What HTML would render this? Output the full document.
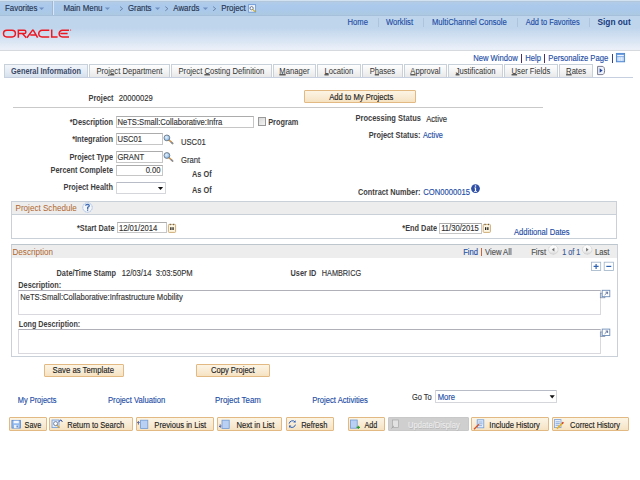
<!DOCTYPE html>
<html><head><meta charset="utf-8">
<style>
html,body{margin:0;padding:0;width:640px;height:480px;overflow:hidden;background:#fff;}
body{font-family:"Liberation Sans",sans-serif;font-size:7.65px;color:#333;position:relative;}
.a{position:absolute;white-space:nowrap;line-height:1;transform:scaleY(1.13);}
.bx{position:absolute;}
.a{margin-top:0.6px;}
.nav{margin-top:1px;}
.hl{margin-top:0;}
.a:not(.lbl):not(.b):not(.gt),.fld span,.btn span{-webkit-text-stroke:0.12px currentColor;}
.tab i,.fld span,.btn span{transform:scaleY(1.13);}
.tab i{font-style:normal;display:inline-block;}
.tab u{text-decoration-thickness:0.6px;text-underline-offset:0.3px;}
.r{text-align:right;}
.b{font-weight:bold;}
.lk{color:#1c4ca4;}
svg{position:absolute;overflow:visible;}
#topbar{position:absolute;left:0;top:0;width:640px;height:15px;background:linear-gradient(#d2e2f0 0,#d2e2f0 1px,#b2c6dc 1px,#b2c6dc 2px,#b2cce8 2px,#aac9ec 6px,#aac9ea 10px,#adc9e2 15px);border-bottom:1px solid #a6c0dc;}
#hdr{position:absolute;left:0;top:16px;width:640px;height:34px;background:linear-gradient(#bed5ec 0,#bfd5ec 35%,#cadcef 50%,#d2e1f2 62%,#dce7f4 78%,#e8eef8 92%,#ebf0f8 100%);}
#hdrline{position:absolute;left:0;top:49.5px;width:640px;height:1.5px;background:#d6dadf;}
.nav{color:#27344f;font-size:7.9px;top:4px;-webkit-text-stroke:0.15px #27344f;}
.hl{color:#1c4ca4;top:18.5px;}
.hsep{position:absolute;top:18px;height:9px;width:1px;background:#aec4de;}
.tab{position:absolute;top:64px;height:13.5px;border:1px solid #c8d0da;border-bottom:none;background:linear-gradient(#fefefe,#f3f3f3 50%,#e6e6e6);color:#333;text-align:center;line-height:14.5px;box-sizing:border-box;white-space:nowrap;}
.tab.act{background:linear-gradient(#f2f6fb,#e4ebf4 50%,#d3dfec);font-weight:bold;color:#3a4866;font-size:7.35px;}
.fld{position:absolute;border:1px solid #c6c6c6;border-top-color:#acacac;background:#fff;color:#333;box-sizing:border-box;}
.fld span{position:absolute;left:0.9px;top:50%;line-height:1;margin-top:-3.2px;white-space:nowrap;}
.lbl{font-weight:bold;color:#3e3e3e;font-size:7.35px;}
.btn{position:absolute;border:1px solid #e2b982;background:linear-gradient(#fcf4e4,#f9ecd6 50%,#f6e2c2);box-sizing:border-box;color:#222;border-radius:1px;}
.btn span{position:absolute;top:50%;margin-top:-3.2px;line-height:1;white-space:nowrap;}
.grp{position:absolute;border:1px solid #c9d0d8;box-sizing:border-box;}
.ghd{position:absolute;left:0;top:0;right:0;height:12px;background:#ededed;}
.gt{color:#b0652c;font-size:8.1px;}
.hr{position:absolute;height:1px;background:#c9c9c9;}
.ns{color:#505050;}
</style></head><body>
<div id="topbar"></div>
<div class="bx" style="left:52px;top:1px;width:1px;height:14px;background:#9fb8d8;border-right:1px solid #dbe6f4"></div>
<div class="a nav" style="left:5px">Favorites</div>
<div class="a nav" style="left:63.4px">Main Menu</div>
<div class="a nav" style="left:127.9px">Grants</div>
<div class="a nav" style="left:173.3px">Awards</div>
<div class="a nav" style="left:221.2px">Project</div>
<svg style="left:0;top:0" width="640" height="16">
 <g fill="#7190c2"><path d="M39 7.6h5.2l-2.6 2.5z"/><path d="M104.8 7.6h5.2l-2.6 2.5z"/><path d="M155 7.6h5.2l-2.6 2.5z"/><path d="M202.8 7.6h5.2l-2.6 2.5z"/></g>
 <g fill="none" stroke="#5d7296" stroke-width="0.8"><path d="M120 6.6l2.6 2.1-2.6 2.1"/><path d="M165.3 6.6l2.6 2.1-2.6 2.1"/><path d="M213.1 6.6l2.6 2.1-2.6 2.1"/></g>
 <rect x="248.6" y="4.6" width="7" height="7.6" fill="#eef3fb" stroke="#6c9ad6" stroke-width="0.9"/>
 <circle cx="251.6" cy="8.2" r="1.6" fill="#fff" stroke="#4a5a7a" stroke-width="0.8"/>
 <path d="M252.8 9.4l2.2 2.4" stroke="#d8b01a" stroke-width="1.3"/>
</svg>

<div id="hdr"></div>
<div id="hdrline"></div>
<svg style="left:0;top:0" width="80" height="45">
 <g fill="none" stroke="#ec1822" stroke-width="1.5">
  <rect x="3.5" y="30.25" width="11.9" height="6.7" rx="3.35"/>
  <path d="M18.35 37.7V30.25H24.2A1.675 1.675 0 0 1 24.2 33.6H18.35M22.4 33.6L26.3 37.7"/>
  <path d="M26.9 37.7L32.4 30.4Q32.9 29.8 33.4 30.4L37.6 37.7M30.3 35H35.9"/>
  <path d="M49.3 30.25H42.1A3.35 3.35 0 0 0 42.1 36.95H49.3"/>
  <path d="M51.7 29.5V36.95H57.6"/>
  <path d="M69 30.25H62.5A3.35 3.35 0 0 0 62.5 36.95H69M60.3 33.6H67.6"/>
 </g>
 <circle cx="70.6" cy="30" r="0.6" fill="#ec1822"/>
</svg>

<div class="a hl" style="left:347.5px">Home</div>
<div class="hsep" style="left:377.5px"></div>
<div class="a hl" style="left:386px">Worklist</div>
<div class="hsep" style="left:422.5px"></div>
<div class="a hl" style="left:432px">MultiChannel Console</div>
<div class="hsep" style="left:517px"></div>
<div class="a hl" style="left:525.8px;font-size:7.4px">Add to Favorites</div>
<div class="hsep" style="left:589px"></div>
<div class="a hl b" style="left:597.5px;font-size:8.3px;color:#163a7e;top:18px">Sign out</div>

<div class="a lk" style="left:473.2px;top:54.8px">New Window</div>
<div class="bx" style="left:521px;top:54px;width:1px;height:9px;background:#4a2e66;width:1.2px"></div>
<div class="a lk" style="left:525.2px;top:54.8px">Help</div>
<div class="bx" style="left:544px;top:54px;width:1px;height:9px;background:#4a2e66;width:1.2px"></div>
<div class="a lk" style="left:548.3px;top:54.8px">Personalize Page</div>
<div class="bx" style="left:612px;top:54px;width:1px;height:9px;background:#33438c;width:1.2px"></div>
<svg style="left:0;top:0" width="640" height="80">
 <rect x="616.4" y="53.4" width="8.2" height="8.4" fill="#6f9fe0" stroke="#4f86d2" stroke-width="0.9"/>
 <rect x="617.2" y="55.1" width="6.6" height="1.1" fill="#fff"/>
 <rect x="617.2" y="56.9" width="6.6" height="4.2" fill="#c4d9f6"/>
 <path d="M619.3 57V61M621.5 57V61M617.2 59H623.8" stroke="#eef4fc" stroke-width="0.5"/>
</svg>

<div class="tab act" style="left:4px;width:84px"><i>General Information</i></div>
<div class="tab" style="left:89px;width:80.8px"><i>Proj<u>e</u>ct Department</i></div>
<div class="tab" style="left:171px;width:100.8px"><i>Project <u>C</u>osting Definition</i></div>
<div class="tab" style="left:272.5px;width:43.8px"><i><u>M</u>anager</i></div>
<div class="tab" style="left:317px;width:43.8px"><i><u>L</u>ocation</i></div>
<div class="tab" style="left:362px;width:40.8px"><i>P<u>h</u>ases</i></div>
<div class="tab" style="left:404px;width:42.8px"><i><u>A</u>pproval</i></div>
<div class="tab" style="left:448px;width:55.2px"><i><u>J</u>ustification</i></div>
<div class="tab" style="left:504px;width:53.8px"><i><u>U</u>ser Fields</i></div>
<div class="tab" style="left:559px;width:34.2px"><i><u>R</u>ates</i></div>
<div class="bx" style="left:4px;top:77px;width:629px;height:1px;background:#c6cfe0"></div>
<svg style="left:0;top:0" width="640" height="80">
 <path d="M597.6 66.4H602.2Q604.6 66.4 604.6 70.5Q604.6 74.6 602.2 74.6H597.6Z" fill="#eef2fb" stroke="#6e6e82" stroke-width="0.9"/>
 <path d="M599.6 68.2L602.6 70.5L599.6 72.8Z" fill="#24449a"/>
</svg>

<!-- main fields -->
<div class="a lbl r" style="right:526.5px;top:94.2px">Project</div>
<div class="a" style="left:118.8px;top:94.2px">20000029</div>
<div class="btn" style="left:304px;top:90px;width:112px;height:13px"><span style="left:24.2px;margin-top:-2.4px">Add to My Projects</span></div>
<div class="hr" style="left:13px;top:107px;width:530px"></div>

<div class="a lbl r" style="right:527px;top:118px">*Description</div>
<div class="fld" style="left:115.5px;top:115.5px;width:138px;height:12.5px"><span>NeTS:Small:Collaborative:Infra</span></div>
<div class="bx" style="left:258.2px;top:117.3px;width:8px;height:8.4px;border:1px solid #999;box-sizing:border-box;background:linear-gradient(135deg,#d8d8d8,#f4f4f4)"></div>
<div class="a lbl" style="left:268.2px;top:118.5px">Program</div>

<div class="a lbl r" style="right:527px;top:135.5px">*Integration</div>
<div class="fld" style="left:115.5px;top:133.3px;width:47.5px;height:11.3px"><span>USC01</span></div>
<div class="a" style="left:181px;top:138.3px">USC01</div>

<div class="a lbl r" style="right:527px;top:153px">Project Type</div>
<div class="fld" style="left:115.5px;top:151px;width:47.5px;height:11.5px"><span>GRANT</span></div>
<div class="a" style="left:181px;top:156.6px">Grant</div>
<svg style="left:0;top:0" width="640" height="200">
 <defs><radialGradient id="mg" cx="0.4" cy="0.4" r="0.6"><stop offset="0" stop-color="#e6f4ff"/><stop offset="1" stop-color="#7fb4e6"/></radialGradient></defs>
 <g id="mag">
  <path d="M169.2 140.2L172.6 143.4" stroke="#d9913a" stroke-width="1.6" stroke-linecap="round"/>
  <path d="M171.4 142.3L172.6 143.4" stroke="#7d90a8" stroke-width="1.6" stroke-linecap="round"/>
  <circle cx="166.9" cy="137.9" r="2.9" fill="url(#mg)" stroke="#6f7884" stroke-width="0.9"/>
 </g>
 <use href="#mag" y="17.6"/>
</svg>

<div class="a lbl r" style="right:527px;top:166.5px">Percent Complete</div>
<div class="fld" style="left:115.5px;top:164.5px;width:47.5px;height:11.3px"><span style="left:auto;right:1.5px">0.00</span></div>
<div class="a lbl" style="left:192px;top:170px">As Of</div>

<div class="a lbl r" style="right:527px;top:183px">Project Health</div>
<div class="fld" style="left:115.5px;top:182.2px;width:50px;height:12.3px;border-color:#d4d6dc;border-top-color:#b8bcc6;border-radius:1px"></div>
<svg style="left:0;top:0" width="640" height="200"><path d="M157.9 187H163.1L160.5 190.1Z" fill="#111"/></svg>
<div class="a lbl" style="left:192px;top:186.6px">As Of</div>

<div class="a lbl" style="left:355.5px;top:114.3px;font-size:7.5px">Processing Status</div>
<div class="a" style="left:426.2px;top:115.3px">Active</div>
<div class="a lbl r" style="right:219.5px;top:131.4px">Project Status:</div>
<div class="a lk" style="left:423px;top:131.4px;font-size:7.3px">Active</div>
<div class="a lbl r" style="right:219.5px;top:188.2px">Contract Number:</div>
<div class="a lk" style="left:423.2px;top:188.2px">CON0000015</div>
<svg style="left:0;top:0" width="640" height="200">
 <circle cx="475.5" cy="188.6" r="4.4" fill="#2f50a6"/>
 <circle cx="475.5" cy="186" r="0.8" fill="#fff"/>
 <path d="M474.3 187.5H476.1V191H477V191.8H474V191H474.9V188.3H474.3Z" fill="#fff"/>
</svg>

<!-- Project Schedule -->
<div class="grp" style="left:11px;top:201px;width:606px;height:37.5px"><div class="ghd" style="border-bottom:1px solid #c9d0d8"></div></div>
<div class="a gt" style="left:15.5px;top:204.3px">Project Schedule</div>
<svg style="left:0;top:0" width="640" height="240">
 <circle cx="87.5" cy="207.5" r="4.7" fill="#f6f7fa" stroke="#9dbbe8" stroke-width="1" stroke-dasharray="1.2 0.5"/>
 <path d="M85.5 205.6Q85.8 204.4 87.5 204.4Q89.3 204.5 89.3 205.7Q89.2 206.6 87.7 207.3V209.2" fill="none" stroke="#3c6ab4" stroke-width="1.3"/>
 <rect x="87" y="209.6" width="1.2" height="1.2" fill="#3c6ab4"/>
</svg>
<div class="a lbl r" style="right:525.5px;top:224.3px">*Start Date</div>
<div class="fld" style="left:117px;top:222.3px;width:49.7px;height:11.2px"><span>12/01/2014</span></div>
<div class="a lbl r" style="right:203px;top:224.3px">*End Date</div>
<div class="fld" style="left:439.3px;top:222.5px;width:42.5px;height:11.2px"><span>11/30/2015</span></div>
<svg style="left:0;top:0" width="640" height="240">
 <g id="cal">
  <rect x="168.4" y="224.4" width="7.2" height="8" rx="0.8" fill="#fdf6e2" stroke="#c9a46a" stroke-width="0.9"/>
  <rect x="170.2" y="227.2" width="1.3" height="2.8" fill="#222"/><rect x="172.4" y="227.2" width="1.3" height="2.8" fill="#222"/>
  <rect x="169.8" y="223.8" width="0.9" height="1.4" fill="#555"/><rect x="173.2" y="223.8" width="0.9" height="1.4" fill="#555"/>
 </g>
 <use href="#cal" x="314.8"/>
</svg>
<div class="a lk" style="left:514px;top:228px">Additional Dates</div>

<!-- Description -->
<div class="grp" style="left:11px;top:244px;width:606.5px;height:112.5px;border-top-color:#bcc6cc"><div class="ghd" style="height:13px"></div></div>
<div class="a gt" style="left:12.5px;top:248px">Description</div>
<div class="a lk" style="left:463.2px;top:248.3px">Find</div>
<div class="bx" style="left:481px;top:248px;width:1px;height:8px;background:#c8643a"></div>
<div class="a ns" style="left:485px;top:248.3px">View All</div>
<div class="a ns" style="left:531.2px;top:248.3px">First</div>
<div class="a" style="left:562.2px;top:248.3px;font-size:7.2px;color:#3a5a96">1 of 1</div>
<div class="a ns" style="left:595px;top:248.3px">Last</div>
<svg style="left:0;top:0" width="640" height="300">
 <defs><linearGradient id="cg" x1="0" y1="0" x2="0" y2="1"><stop offset="0" stop-color="#ffffff"/><stop offset="0.6" stop-color="#f2f2f2"/><stop offset="1" stop-color="#d6d6d6"/></linearGradient></defs>
 <circle cx="553.3" cy="249.6" r="4.7" fill="url(#cg)" stroke="#c4c4c4" stroke-width="0.7" stroke-dasharray="1.1 0.5"/>
 <path d="M554.4 247.8V251.6L551.9 249.7Z" fill="#6c6c6c"/>
 <circle cx="587.2" cy="249.6" r="4.7" fill="url(#cg)" stroke="#c4c4c4" stroke-width="0.7" stroke-dasharray="1.1 0.5"/>
 <path d="M586.1 247.8V251.6L588.6 249.7Z" fill="#6c6c6c"/>
 <rect x="591.5" y="262.2" width="9.2" height="8.3" fill="#fff" stroke="#9fb2c8" stroke-width="0.8"/>
 <path d="M593.6 266.4H598.6M596.1 263.9V268.9" stroke="#2e62b0" stroke-width="1.2"/>
 <rect x="604.2" y="262.2" width="9.2" height="8.3" fill="#fff" stroke="#9fb2c8" stroke-width="0.8"/>
 <path d="M606.3 266.4H611.3" stroke="#2e62b0" stroke-width="1.2"/>
</svg>

<div class="a lbl r" style="right:524px;top:269.2px">Date/Time Stamp</div>
<div class="a" style="left:121.75px;top:269.2px">12/03/14&nbsp; 3:03:50PM</div>
<div class="a lbl r" style="right:323.75px;top:269.2px">User ID</div>
<div class="a" style="left:321.75px;top:269.2px;font-size:7.3px">HAMBRICG</div>
<div class="a lbl" style="left:18.25px;top:281.2px">Description:</div>
<div class="fld" style="left:18.25px;top:290.3px;width:582.3px;height:24.6px;border-color:#d8d8de;border-top:1.5px solid #b0b0b8"><span style="top:2.7px;margin-top:0">NeTS:Small:Collaborative:Infrastructure Mobility</span></div>
<div class="a lbl" style="left:18.75px;top:320px;font-size:7.2px">Long Description:</div>
<div class="fld" style="left:18.25px;top:328.7px;width:582.3px;height:25px;border-color:#d8d8de;border-top:1.5px solid #b0b0b8"></div>
<svg style="left:0;top:0" width="640" height="360">
 <g id="exp">
  <rect x="600.3" y="293.2" width="4.6" height="4.6" fill="#d8e4f4" stroke="#7a86a0" stroke-width="0.7"/>
  <rect x="602.2" y="290.3" width="7.6" height="6.4" fill="#fff" stroke="#6e8db8" stroke-width="0.9"/>
  <path d="M604.6 295L607.6 292.2M605.6 292.2H607.6V294.2" fill="none" stroke="#4a5a88" stroke-width="0.8"/>
 </g>
 <use href="#exp" y="38.8"/>
</svg>

<div class="btn" style="left:44.2px;top:363.7px;width:79.6px;height:13px"><span style="left:7.4px;font-size:7.75px">Save as Template</span></div>
<div class="btn" style="left:196.2px;top:363.7px;width:73.8px;height:13px"><span style="left:13.7px">Copy Project</span></div>

<div class="a lk" style="left:17.7px;top:396.2px;font-size:7.45px">My Projects</div>
<div class="a lk" style="left:108px;top:396.2px">Project Valuation</div>
<div class="a lk" style="left:215px;top:396.2px;font-size:7.9px">Project Team</div>
<div class="a lk" style="left:312.2px;top:396.2px">Project Activities</div>
<div class="a" style="left:412px;top:393.2px;font-size:7.45px;color:#333">Go To</div>
<div class="fld" style="left:435.2px;top:390.3px;width:122.3px;height:13px;border-color:#d4d6dc;border-top-color:#b8bcc6;border-radius:1px"><span class="lk" style="left:1.5px">More</span></div>
<svg style="left:0;top:0" width="640" height="420"><path d="M549.6 395.3H554.8L552.2 398.4Z" fill="#111"/></svg>

<!-- toolbar -->
<div class="btn" style="left:9.1px;top:417px;width:37.5px;height:13.5px"><span style="left:14.5px;margin-top:-1.5px;font-size:7.3px">Save</span></div>
<div class="btn" style="left:49.2px;top:417px;width:83.8px;height:13.5px"><span style="left:17.0px;margin-top:-1.5px;font-size:7.55px">Return to Search</span></div>
<div class="btn" style="left:135.5px;top:417px;width:78.8px;height:13.5px"><span style="left:17.8px;margin-top:-1.5px">Previous in List</span></div>
<div class="btn" style="left:217.1px;top:417px;width:65.3px;height:13.5px"><span style="left:18.4px;margin-top:-1.5px">Next in List</span></div>
<div class="btn" style="left:285.6px;top:417px;width:48.7px;height:13.5px"><span style="left:14.6px;margin-top:-1.5px;font-size:7.5px">Refresh</span></div>
<div class="btn" style="left:347.6px;top:417px;width:37.8px;height:13.5px"><span style="left:15.9px;margin-top:-1.5px;font-size:7.2px">Add</span></div>
<div class="btn" style="left:388px;top:417px;width:80.5px;height:13.5px;background:#cfcfcf;border-color:#c8c8c8"><span style="left:19.0px;margin-top:-1.5px;color:#ececec;text-shadow:0.5px 0.5px 0 #b8b8b8">Update/Display</span></div>
<div class="btn" style="left:471.4px;top:417px;width:77.2px;height:13.5px"><span style="left:16.9px;margin-top:-1.5px">Include History</span></div>
<div class="btn" style="left:551.5px;top:417px;width:77.3px;height:13.5px"><span style="left:17.6px;margin-top:-1.5px;font-size:7.47px">Correct History</span></div>
<svg style="left:0;top:0" width="640" height="440">
 <!-- save floppy -->
 <rect x="11.9" y="420.3" width="8.6" height="7.8" fill="#8fb6ec" stroke="#4f82cc" stroke-width="0.7"/>
 <rect x="13.6" y="420.7" width="5.2" height="2.6" fill="#f4f8fe"/>
 <rect x="14" y="424.9" width="4.4" height="3.2" fill="#e8f0fb"/>
 <rect x="16.6" y="425.5" width="1.1" height="2" fill="#3a6ab8"/>
 <!-- return to search -->
 <rect x="52" y="420" width="7" height="7.6" fill="#dfeafa" stroke="#6f9ad6" stroke-width="0.8"/>
 <circle cx="55.6" cy="423.6" r="2" fill="#fff" stroke="#5a6a86" stroke-width="0.8"/>
 <path d="M57 425.2L59.4 427.8" stroke="#d8a020" stroke-width="1.2"/>
 <path d="M58.6 421.8L61 419.8L62.4 422" fill="none" stroke="#24449a" stroke-width="0.9"/>
 <!-- previous -->
 <rect x="140.6" y="420.2" width="7.2" height="8.2" fill="#b9d0f2" stroke="#6f9ad6" stroke-width="0.8"/>
 <path d="M138.4 421.6V424.6M137.2 422.8L138.4 421.6L139.6 422.8" fill="none" stroke="#24449a" stroke-width="0.8"/>
 <!-- next -->
 <rect x="222" y="420.2" width="7.2" height="8.2" fill="#b9d0f2" stroke="#6f9ad6" stroke-width="0.8"/>
 <path d="M220.2 424.4V427.2M219 426L220.2 427.2L221.4 426" fill="none" stroke="#24449a" stroke-width="0.8"/>
 <!-- refresh -->
 <path d="M289.2 423.6A3.4 3.4 0 0 1 295.2 422" fill="none" stroke="#2f62b8" stroke-width="1"/>
 <path d="M295.6 420.2V422.6H293.2Z" fill="#2f62b8"/>
 <path d="M295.4 424.6A3.4 3.4 0 0 1 289.4 426.2" fill="none" stroke="#2f62b8" stroke-width="1"/>
 <path d="M289 428V425.6H291.4Z" fill="#2f62b8"/>
 <!-- add -->
 <rect x="350.4" y="420" width="6.8" height="8.2" fill="#b9d0f2" stroke="#6f9ad6" stroke-width="0.8"/>
 <path d="M356.6 427.4H360M358.3 425.7V429.1" stroke="#2a9a2a" stroke-width="1.1"/>
 <!-- update/display disabled -->
 <rect x="392.6" y="420" width="6" height="7.6" fill="#e2e2e2" stroke="#a8a8a8" stroke-width="0.7"/>
 <path d="M391.4 428.4L394 425.8" stroke="#a0a0a0" stroke-width="0.9"/>
 <!-- include history -->
 <rect x="477.2" y="419.8" width="6.6" height="8" fill="#e6eefa" stroke="#6f9ad6" stroke-width="0.8"/>
 <path d="M478.4 422H482.6M478.4 423.8H482.6M478.4 425.6H482" stroke="#5a88c8" stroke-width="0.6"/>
 <path d="M474 429.2L479 424.2" stroke="#d85020" stroke-width="1.3"/>
 <!-- correct history -->
 <rect x="554.4" y="419.6" width="6.6" height="8" fill="#e6eefa" stroke="#7da0d6" stroke-width="0.8"/>
 <path d="M555.6 421.8H559.8M555.6 423.6H559.8M555.6 425.4H559" stroke="#5a88c8" stroke-width="0.6"/>
 <path d="M557 428.6L562.6 423" stroke="#e8b020" stroke-width="1.6"/>
 <path d="M562 423.6L563.4 422.2" stroke="#d04020" stroke-width="1.6"/>
</svg>

</body></html>
